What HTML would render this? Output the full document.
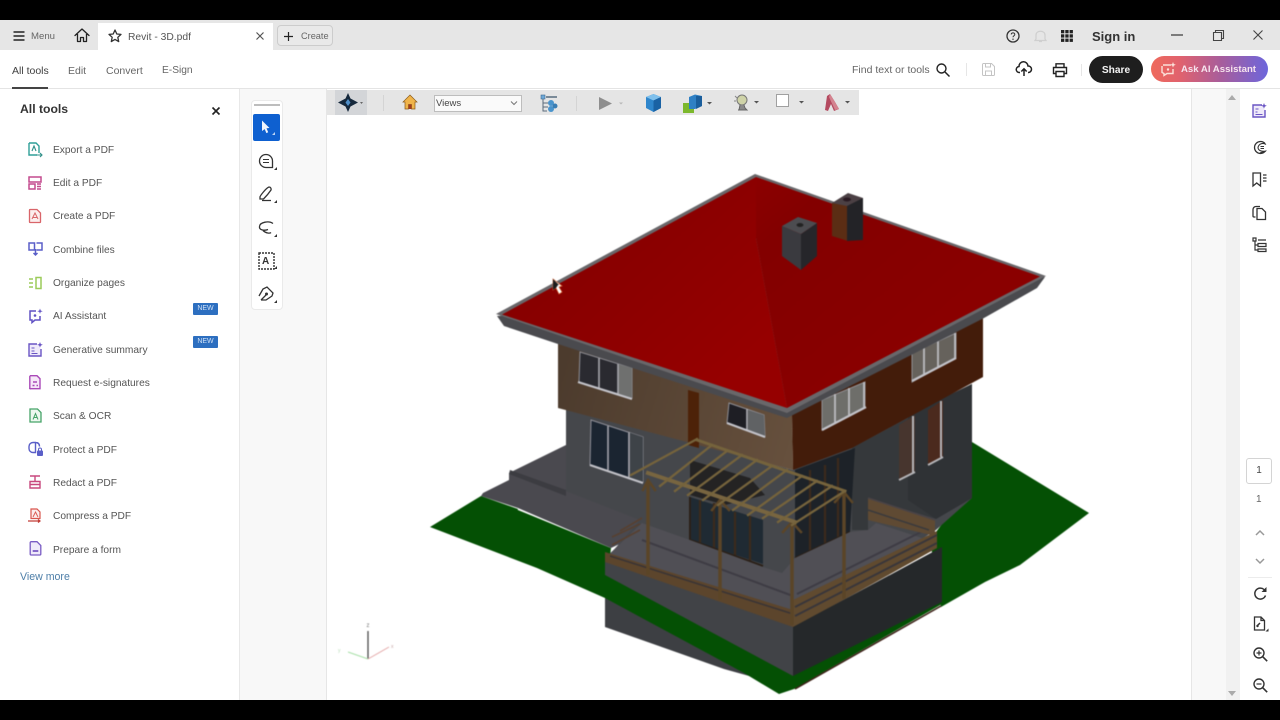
<!DOCTYPE html>
<html><head><meta charset="utf-8"><title>Revit - 3D.pdf</title>
<style>
*{box-sizing:border-box}
html,body{margin:0;padding:0;width:1280px;height:720px;overflow:hidden;background:#000}
body{font-family:"Liberation Sans",sans-serif;color:#444;position:relative}
.a{position:absolute}
.t{position:absolute;white-space:nowrap;font-size:10.8px;line-height:14px;color:#505050}
svg{position:absolute;overflow:visible}
.i{fill:none;stroke-width:1.3;stroke-linecap:round;stroke-linejoin:round}
.tool{left:53px;color:#555;font-size:10.2px;margin-top:1px}
.new{position:absolute;left:193px;width:25px;height:12px;background:#2d6fc0;color:#cfe0f5;font-size:7px;line-height:12px;text-align:center;border-radius:1px}
#app{position:absolute;left:0;top:0;width:1280px;height:720px;filter:blur(.35px)}
</style></head><body>
<div id="app">
<div class="a" style="left:0;top:0;width:1280px;height:20px;background:#000"></div>
<div class="a" style="left:0;top:700px;width:1280px;height:20px;background:#000"></div>
<div class="a" style="left:0;top:20px;width:1280px;height:30px;background:#e6e6e6"></div>
<div class="a" style="left:0;top:50px;width:1280px;height:39px;background:#fff;border-bottom:1px solid #e4e4e4"></div>
<div class="a" style="left:98px;top:23px;width:175px;height:27px;background:#fff"></div>

<!-- tab bar -->
<svg style="left:13px;top:31px" width="12" height="10"><path d="M0.500 1H11.500M0.500 5H11.500M0.500 9H11.500" stroke="#222" stroke-width="1.400"/></svg>
<div class="t" style="left:31px;top:30px;font-size:9.600px;color:#666">Menu</div>
<svg style="left:74px;top:28px" width="16" height="15"><path class="i" stroke="#222" stroke-width="1.500" d="M1 7.500L8 1l7 6.500M3.500 6v7.500h3V9.500h3v4h3V6"/></svg>
<svg style="left:108px;top:29px" width="14" height="14"><path class="i" stroke="#333" d="M7 1l1.800 4 4.200.4-3.200 2.900.9 4.300L7 10.400l-3.700 2.200.9-4.300L1 5.400l4.200-.4z"/></svg>
<div class="t" style="left:128px;top:31px;font-size:10.300px;color:#555">Revit - 3D.pdf</div>
<svg style="left:256px;top:32px" width="8" height="8"><path d="M.5.500l7 7M7.500.500l-7 7" stroke="#555" stroke-width="1.200"/></svg>
<div class="a" style="left:277px;top:25px;width:56px;height:21px;border:1px solid #ccc;border-radius:4px;background:#e9e9e9"></div>
<svg style="left:284px;top:32px" width="9" height="9"><path d="M4.500 0v9M0 4.500h9" stroke="#222" stroke-width="1.200"/></svg>
<div class="t" style="left:301px;top:29px;font-size:9.200px;color:#666">Create</div>

<svg style="left:1006px;top:29px" width="14" height="14"><circle cx="7" cy="7" r="6" fill="none" stroke="#333" stroke-width="1.300"/><path d="M5.200 5.400c.2-2.200 3.700-2 3.600.1 0 1.300-1.800 1.300-1.800 2.800" fill="none" stroke="#333"/><circle cx="7" cy="10.200" r=".7" fill="#333"/></svg>
<svg style="left:1034px;top:29px" width="13" height="14"><path d="M2 10V6c0-5 9-5 9 0v4l1 1.500H1zM5 12.500h3" fill="none" stroke="#cfcfcf" stroke-width="1.200"/></svg>
<svg style="left:1061px;top:30px" width="12" height="12" fill="#222"><rect width="3.300" height="3.300"/><rect x="4.300" width="3.300" height="3.300"/><rect x="8.600" width="3.300" height="3.300"/><rect y="4.300" width="3.300" height="3.300"/><rect x="4.300" y="4.300" width="3.300" height="3.300"/><rect x="8.600" y="4.300" width="3.300" height="3.300"/><rect y="8.600" width="3.300" height="3.300"/><rect x="4.300" y="8.600" width="3.300" height="3.300"/><rect x="8.600" y="8.600" width="3.300" height="3.300"/></svg>
<div class="t" style="left:1092px;top:29px;font-size:13px;font-weight:bold;color:#333;line-height:16px">Sign in</div>
<svg style="left:1171px;top:34px" width="12" height="2"><path d="M0 1h12" stroke="#444" stroke-width="1.300"/></svg>
<svg style="left:1213px;top:30px" width="11" height="11"><path d="M.5 2.500h8v8h-8zM2.500 2.500V.5h8v8h-2" fill="none" stroke="#444" stroke-width="1.100"/></svg>
<svg style="left:1253px;top:30px" width="10" height="10"><path d="M.5.500l9 9M9.500.500l-9 9" stroke="#444" stroke-width="1.100"/></svg>

<!-- second bar -->
<div class="t" style="left:12px;top:64px;color:#404040;font-size:10.500px">All tools</div>
<div class="a" style="left:12px;top:87px;width:36px;height:2px;background:#444"></div>
<div class="t" style="left:68px;top:64px;color:#666;font-size:10.500px">Edit</div>
<div class="t" style="left:106px;top:64px;color:#666;font-size:10.500px">Convert</div>
<div class="t" style="left:162px;top:64px;color:#666;font-size:10.200px">E-Sign</div>
<div class="t" style="left:852px;top:63px;color:#666;font-size:10.500px">Find text or tools</div>
<svg style="left:936px;top:63px" width="14" height="14"><circle cx="5.500" cy="5.500" r="4.500" fill="none" stroke="#222" stroke-width="1.400"/><path d="M9 9l4.500 4.500" stroke="#222" stroke-width="1.500"/></svg>
<div class="a" style="left:966px;top:63px;width:1px;height:13px;background:#e6e6e6"></div>
<svg style="left:982px;top:63px" width="13" height="13"><path d="M1.500.5h8l3 3v8a1 1 0 0 1-1 1h-10a1 1 0 0 1-1-1v-10a1 1 0 0 1 1-1zM3.500.5v3.500h5V.5M3.500 12.500V8h6v4.500" fill="none" stroke="#c4c4c4" stroke-width="1"/></svg>
<svg style="left:1016px;top:62px" width="16" height="15"><path d="M4 10.500H3.500a3 3 0 0 1-.5-6 4.500 4.500 0 0 1 9-.5 3.200 3.200 0 0 1 .5 6.500H12M8 14V7M5.300 9.500L8 6.800l2.700 2.700" fill="none" stroke="#222" stroke-width="1.500"/></svg>
<svg style="left:1052px;top:63px" width="16" height="14"><path d="M4 4V.8h8V4M4 10.500H1.500V4.500h13v6H12M4 8.500h8v5H4z" fill="none" stroke="#222" stroke-width="1.400"/></svg>
<div class="a" style="left:1081px;top:64px;width:1px;height:12px;background:#e6e6e6"></div>
<div class="a" style="left:1089px;top:56px;width:54px;height:27px;border-radius:14px;background:#1e1e1e;color:#f4f4f4;font-size:10.200px;font-weight:bold;text-align:center;line-height:29px">Share</div>
<div class="a" style="left:1151px;top:56px;width:117px;height:26px;border-radius:13px;background:linear-gradient(90deg,#ef6a5c 0%,#e0626e 25%,#a75d9c 60%,#6d66dc 100%);color:#f7e4ee;font-size:9.600px;font-weight:bold;line-height:28px;padding-left:30px;white-space:nowrap">Ask AI Assistant</div>
<svg style="left:1161px;top:62px" width="15" height="14"><path d="M2 3h8M1 4v6.500l2 1v2l3-2h6V7" fill="none" stroke="#fbe0d8" stroke-width="1.400"/><path d="M12 0l.8 2 2 .8-2 .8-.8 2-.8-2-2-.8 2-.8z" fill="#fbe0d8"/><circle cx="7" cy="7.500" r="1.200" fill="#fbe0d8"/></svg>

<!-- panels -->
<div class="a" style="left:0;top:89px;width:240px;height:611px;background:#fff;border-right:1px solid #e8e8e8"></div>
<div class="a" style="left:240px;top:89px;width:87px;height:611px;background:#f8f8f8;border-right:1px solid #e6e6e6"></div>
<div class="a" style="left:327px;top:89px;width:865px;height:611px;background:#fff"></div>
<div class="a" style="left:1191px;top:89px;width:49px;height:611px;background:#f8f8f8;border-left:1px solid #e6e6e6"></div>
<div class="a" style="left:1226px;top:89px;width:14px;height:611px;background:#f1f1f1"></div>
<div class="a" style="left:1240px;top:89px;width:40px;height:611px;background:#fff"></div>

<div class="t" style="left:20px;top:102px;font-size:12.200px;font-weight:bold;color:#333;line-height:14px">All tools</div>
<svg style="left:212px;top:107px" width="8" height="8"><path d="M.5.500l7 7M7.500.500l-7 7" stroke="#222" stroke-width="1.600"/></svg>

<!-- tool list -->
<svg style="left:27px;top:142px" width="16" height="16"><path d="M2 1h7l3 3v7M2 1v12h8" fill="none" stroke="#2f9f98" stroke-width="1.400"/><path d="M5 9l2-5 2 5M9 13h6M13 11l2 2-2 2" fill="none" stroke="#2f8f88" stroke-width="1.100"/></svg>
<div class="t tool" style="top:143px">Export a PDF</div>
<svg style="left:28px;top:176px" width="14" height="14"><path d="M1 1h12v5H1zM1 8h6v5H1zM9 8h4M9 10.500h4M9 13h4" fill="none" stroke="#c44a8e" stroke-width="1.500"/></svg>
<div class="t tool" style="top:176px">Edit a PDF</div>
<svg style="left:28px;top:209px" width="14" height="14"><path d="M1.500 1a.5.500 0 0 1 .5-.5h7l3.500 3.500v9a.5.500 0 0 1-.5.500H2a.5.500 0 0 1-.5-.5z" fill="#fbeeee" stroke="#d9656a" stroke-width="1.300"/><path d="M4 10l3-6 3 6M5 8.500h4" fill="none" stroke="#d9656a" stroke-width="1"/></svg>
<div class="t tool" style="top:209px">Create a PDF</div>
<svg style="left:28px;top:242px" width="15" height="15"><path d="M1 1h5.500v7H1zM8.500 1H14v7H8.500M7.500 7v6M5.500 11l2 2 2-2" fill="none" stroke="#5a5fc8" stroke-width="1.500"/></svg>
<div class="t tool" style="top:243px">Combine files</div>
<svg style="left:28px;top:276px" width="14" height="14"><path d="M8 1.500h5v11H8zM1 3h4M1 7h4M1 11h4" fill="none" stroke="#9ccb5a" stroke-width="1.500"/></svg>
<div class="t tool" style="top:276px">Organize pages</div>
<svg style="left:28px;top:308px" width="15" height="16"><path d="M8 3H2v9h2v2.500l3-2.500h5V8" fill="none" stroke="#6152c4" stroke-width="1.500"/><circle cx="7" cy="7.500" r="1.300" fill="#6152c4"/><path d="M12 .500l.7 2 2 .7-2 .7-.7 2-.7-2-2-.7 2-.7z" fill="#6152c4"/></svg>
<div class="t tool" style="top:309px">AI Assistant</div>
<div class="new" style="top:303px">NEW</div>
<svg style="left:28px;top:342px" width="15" height="15"><path d="M9 2H1v12h12V7" fill="#efeafa" stroke="#6a55c4" stroke-width="1.400"/><path d="M3.500 6h3M3.500 9h3M3.500 11.500h6" stroke="#6a55c4"/><path d="M12 0l.8 2 2 .8-2 .8-.8 2-.8-2-2-.8 2-.8z" fill="#6a55c4"/></svg>
<div class="t tool" style="top:343px">Generative summary</div>
<div class="new" style="top:336px">NEW</div>
<svg style="left:29px;top:375px" width="12" height="15"><path d="M1.500.7h6.500l3 3v10H1.500a.5.500 0 0 1-.7-.7V1.500z" fill="#f6e8f8" stroke="#aa4ab8" stroke-width="1.400"/><path d="M4 7h4M3.500 10.500h2M7.500 10.500h1.500" stroke="#aa4ab8" stroke-width="1.500"/></svg>
<div class="t tool" style="top:376px">Request e-signatures</div>
<svg style="left:29px;top:408px" width="13" height="15"><path d="M1 1h7.500l3.500 3.500v9.500H1z" fill="#eef8f0" stroke="#46a368" stroke-width="1.300"/><path d="M4 11.500l2.500-6 2.500 6M5 9.500h3" fill="none" stroke="#46a368"/></svg>
<div class="t tool" style="top:409px">Scan &amp; OCR</div>
<svg style="left:28px;top:441px" width="16" height="16"><path d="M5 1.500h2.500v10H5a4 4 0 0 1-4-4v-2a4 4 0 0 1 4-4zM7.500 1.500c3 0 4 1.500 4 4" fill="none" stroke="#5a5fc8" stroke-width="1.400"/><rect x="9" y="9.500" width="6" height="5.500" rx="1" fill="#5a5fc8"/><path d="M10.500 9.500v-1a1.500 1.500 0 0 1 3 0v1" fill="none" stroke="#5a5fc8"/></svg>
<div class="t tool" style="top:443px">Protect a PDF</div>
<svg style="left:28px;top:475px" width="14" height="14"><path d="M2 1h10M7 1v5M2 6.500h10v6.500H2zM2 9.500h10" fill="none" stroke="#c8487e" stroke-width="1.400"/></svg>
<div class="t tool" style="top:476px">Redact a PDF</div>
<svg style="left:28px;top:508px" width="15" height="16"><path d="M3 1h6l3 3v6.500H3z" fill="#fbecec" stroke="#d9564e" stroke-width="1.200"/><path d="M5 9l2.500-5 2.500 5" fill="none" stroke="#d9564e" stroke-width=".9"/><path d="M0 13h12M10 11.500l2 1.500-2 1.500" fill="none" stroke="#c23c36" stroke-width="1.200"/></svg>
<div class="t tool" style="top:509px">Compress a PDF</div>
<svg style="left:29px;top:541px" width="13" height="15"><path d="M1.200 1.700a1 1 0 0 1 1-1H8L11.800 4.500V13a1 1 0 0 1-1 1H2.200a1 1 0 0 1-1-1z" fill="#efeafa" stroke="#7a5cc4" stroke-width="1.300"/><path d="M3.700 10h5.600" stroke="#7a5cc4" stroke-width="1.800"/></svg>
<div class="t tool" style="top:543px">Prepare a form</div>
<div class="t" style="left:20px;top:570px;color:#4d7ea8;font-size:10.600px">View more</div>

<!-- tool strip -->
<div class="a" style="left:251px;top:100px;width:32px;height:210px;background:#fff;border:1px solid #eaeaea;border-radius:4px"></div>
<div class="a" style="left:254px;top:104px;width:26px;height:2px;background:#bdbdbd"></div>
<div class="a" style="left:253px;top:114px;width:27px;height:27px;background:#0e60d0;border-radius:2px"></div>
<svg style="left:260px;top:120px" width="16" height="16"><path d="M2 0.500l7.500 7.500-3 .3 1.700 4-1.800.8-1.700-4L2 11z" fill="#f2f6fc"/><path d="M15 12v3h-3z" fill="#bcd4f4"/></svg>
<svg style="left:258px;top:153px" width="20" height="18"><path d="M8 14.500a6.500 6.500 0 1 1 6.500-6.500v6.500z" fill="none" stroke="#333" stroke-width="1.300"/><path d="M5 6.500h6M5 9.500h6" stroke="#333"/><path d="M19 14v3h-3z" fill="#333"/></svg>
<svg style="left:258px;top:186px" width="20" height="18"><path d="M2 11c0-1 6-9 9-10 1.500 0 2.500 1.500 2 3-2 3-6 7.500-7.500 9H2zM4 14.500h9" fill="none" stroke="#333" stroke-width="1.300"/><path d="M19 14v3h-3z" fill="#333"/></svg>
<svg style="left:258px;top:220px" width="20" height="18"><path d="M15 3.500C11 .5 2 2 1.500 6.500 1 10 6 11 10 9.500M5 10.500c3 3 7 3 8 2" fill="none" stroke="#333" stroke-width="1.300"/><path d="M19 14v3h-3z" fill="#333"/></svg>
<svg style="left:258px;top:252px" width="20" height="18"><rect x="1" y="1" width="15" height="16" fill="none" stroke="#333" stroke-width="1.400" stroke-dasharray="2 1"/><path d="M19 14v3h-3z" fill="#333"/></svg>
<div class="t" style="left:262px;top:255px;font-size:10px;font-weight:bold;color:#333">A</div>
<svg style="left:258px;top:286px" width="20" height="18"><path d="M1 10l4-7 4-2 6 6-1 3-6 4H3M3 14l5-5" fill="none" stroke="#333" stroke-width="1.300"/><circle cx="8.500" cy="8" r="1.500" fill="#333"/><path d="M19 14v3h-3z" fill="#333"/></svg>

<!-- 3D toolbar -->
<div class="a" style="left:327px;top:90px;width:532px;height:25px;background:#e5e5e5"></div>
<div class="a" style="left:335px;top:90px;width:32px;height:25px;background:#d3d5d8"></div>
<svg style="left:338px;top:93px" width="30" height="20"><path d="M10 0l2.500 5.500L20 9.500l-7.500 4L10 19l-2.500-5.500L0 9.500l7.500-4z" fill="#15283c"/><path d="M10 6l2.500 3.500L10 13l-2.500-3.500z" fill="#4f8ec8"/><path d="M22 9h3l-1.500 2z" fill="#666"/></svg>
<div class="a" style="left:383px;top:95px;width:1px;height:16px;background:#d4d4d4"></div>
<svg style="left:403px;top:95px" width="14" height="14"><path d="M7 0L0 7h2v7h3.500V9.500h3V14H12V7h2z" fill="#f0b44a" stroke="#8a5a1a" stroke-width=".7"/><path d="M5.500 9.500h3V14h-3z" fill="#a03c1e"/></svg>
<div class="a" style="left:434px;top:95px;width:88px;height:17px;background:#fafafa;border:1px solid #bdbdbd"></div>
<div class="t" style="left:436px;top:97px;font-size:9.500px;color:#444">Views</div>
<svg style="left:510px;top:101px" width="8" height="5"><path d="M1 .5l3 3 3-3" fill="none" stroke="#777"/></svg>
<svg style="left:540px;top:94px" width="18" height="19"><path d="M3 5v12h4M3 9h5M3 13h5" fill="none" stroke="#5c6c7c"/><rect x="1" y="1" width="4" height="4" fill="#6ea9d8" stroke="#406a90" stroke-width=".6"/><rect x="6" y="2" width="11" height="2" fill="#7a8a98"/><circle cx="11" cy="9" r="3" fill="#4a94cc"/><circle cx="11" cy="15" r="3" fill="#4a94cc"/><circle cx="15" cy="12" r="2.500" fill="#3a7eb4"/></svg>
<div class="a" style="left:576px;top:96px;width:1px;height:15px;background:#d4d4d4"></div>
<svg style="left:598px;top:97px" width="28" height="13"><path d="M1 0l13 6.500-13 6.500z" fill="#8e8e8e"/><path d="M21 5.500h4l-2 2z" fill="#b8b8b8"/></svg>
<svg style="left:645px;top:94px" width="17" height="18"><path d="M8.500 0L16 3v11l-7.500 4L1 14V3z" fill="#2f86cc"/><path d="M1 3l7.500 3.500L16 3 8.500 0z" fill="#7fc0ec"/><path d="M8.500 6.500V18L16 14V3z" fill="#1a62a4"/></svg>
<svg style="left:682px;top:94px" width="32" height="20"><rect x="1" y="9" width="11" height="10" fill="#7cb82c"/><path d="M7 3l6-2.500 7 1.500v10l-7 3H7z" fill="#2f80c4"/><path d="M14 2l6 0v10l-6 3z" fill="#1a5e9c"/><path d="M25 8h5l-2.500 2.500z" fill="#555"/></svg>
<svg style="left:733px;top:93px" width="28" height="20"><circle cx="9" cy="7" r="5" fill="#cfd3a8" stroke="#777"/><path d="M7 12l-1 5h8l-2-2-1-3M5 17h9" fill="#8a8a8a" stroke="#666"/><path d="M2 3l2 2M1 8l2 0" stroke="#888"/><path d="M21 8h5l-2.500 2.500z" fill="#555"/></svg>
<div class="a" style="left:776px;top:94px;width:13px;height:13px;background:#fff;border:1px solid #a0a0a0"></div>
<svg style="left:798px;top:100px" width="8" height="5"><path d="M1 1h5L3.500 3.500z" fill="#555"/></svg>
<svg style="left:822px;top:94px" width="30" height="19"><path d="M3 16L5 2l3-2 5 8 4 7-5 2-3-7-3 7z" fill="#b44a60"/><path d="M8 0l5 8 4 7-4 1-6-13z" fill="#d4838f"/><path d="M23 7h5l-2.500 2.500z" fill="#555"/></svg>

<!-- HOUSE -->
<svg style="left:0;top:0;filter:blur(.5px)" width="1280" height="720" viewBox="0 0 1280 720">
<defs>
<linearGradient id="rl" x1="560" y1="210" x2="720" y2="380" gradientUnits="userSpaceOnUse"><stop offset="0" stop-color="#850000"/><stop offset=".45" stop-color="#8c0000"/><stop offset="1" stop-color="#960000"/></linearGradient>
<linearGradient id="rr" x1="756" y1="178" x2="900" y2="350" gradientUnits="userSpaceOnUse"><stop offset="0" stop-color="#8c0000"/><stop offset=".25" stop-color="#830000"/><stop offset="1" stop-color="#8a0000"/></linearGradient>
<linearGradient id="wb" x1="558" y1="370" x2="793" y2="440" gradientUnits="userSpaceOnUse"><stop offset="0" stop-color="#4c3b2d"/><stop offset="1" stop-color="#66503d"/></linearGradient>
</defs>
<!-- lower basement -->
<polygon points="605,590 605,627 724,669 793,688 793,640" fill="#3d3f43"/>
<!-- ground -->
<polygon points="430,527 481,496 518,509 611,548 605,598 537,568 498,553" fill="#045004"/>
<polygon points="605,570 793,670 942,600 942,604 794,689 779,694 744,673 605,598" fill="#045004"/>
<polygon points="972,442 1089,513 1020,565 985,582 941,607 930,540 960,500" fill="#045004"/>
<path d="M795 689L941 606" stroke="#3a1e14" stroke-width="1.500"/>
<path d="M518 509L611 547" stroke="#fff" stroke-width="2"/>
<!-- left terrace -->
<polygon points="566,445 509,473 509,480 483,493 481,496 518,508 611,548 650,530 650,480 566,440" fill="#4a494f"/>
<polygon points="509,474 566,496 566,490 510,470" fill="#3c3c41"/>
<!-- lower base wall, no gaps -->
<polygon points="566,408 793,470 972,384 972,498 936,530 793,620 605,560 640,520 566,491" fill="#45474b"/>
<polygon points="852,448 972,384 972,498 936,519 868,498 868,530 852,530" fill="#35383b"/>
<polygon points="908,415 972,384 972,498 936,519 908,500" fill="#2f3235"/>
<!-- recess glazing -->
<polygon points="690,497 763,520 763,564 690,540" fill="#1f2a33"/>
<polygon points="795,470 855,448 850,532 795,558" fill="#1d2228"/>
<path d="M700 500V545M714 503V550M735 512V556M750 516V561M810 470V552M825 465V546M838 458V540" stroke="#3b2a1c" stroke-width="2.200"/>
<path d="M690 497V540L763 566M795 558L850 532" stroke="#2a2018" stroke-width="2" fill="none"/>
<!-- terrace floor -->
<polygon points="605,558 642,523 690,540 763,567 782,573 795,558 850,532 868,530 876,523 937,543 794,620" fill="#504f55"/>
<path d="M642 540L793 596M797 594L935 525" stroke="#3e3c44" stroke-width="2"/>
<!-- rear rail -->
<polygon points="868,498 935,520 935,536 868,520" fill="#5f4a33"/>
<path d="M868 498L935 520" stroke="#4a4346" stroke-width="1.500"/>
<path d="M868 510L929 530" stroke="#3b3a3c" stroke-width="1.500"/>
<!-- rails -->
<polygon points="605,552 793,610 793,628 605,565" fill="#5c452c"/>
<path d="M610 556L793 614" stroke="#3a3435" stroke-width="1.500"/>
<path d="M620 531L642 518M612 537L640 524M612 545L640 530" stroke="#574030" stroke-width="1.600"/>
<polygon points="793,600 937,531 937,548 793,628" fill="#604a2f"/>
<path d="M795 607L937 535M795 616L937 543" stroke="#39363a" stroke-width="2"/>
<!-- terrace block -->
<polygon points="605,562 793,627 793,676 605,575" fill="#414347"/>
<polygon points="793,627 942,547 942,602 793,676" fill="#25282a"/>
<!-- upper walls -->
<polygon points="558,335 792,412 793,470 558,408" fill="url(#wb)"/>
<polygon points="792,415 983,312 983,377 852,448 793,470" fill="#431c0a"/>
<polygon points="688,390 699,393 699,448 688,445" fill="#4d2208"/>
<!-- shade under pergola -->
<polygon points="690,460 750,478 765,495 725,505 690,495" fill="#1e1d1c" opacity=".85"/>
<!-- windows upper -->
<g>
<polygon points="580,352 632,368 632,398 579,382" fill="#2a2a30" stroke="#8f8f96" stroke-width="1"/>
<polygon points="618,364 632,368 632,398 618,394" fill="#6f706f"/>
<path d="M599 358V388M618 364V394" stroke="#a6a6ac" stroke-width="1.600"/>
<path d="M578 382L632 399" stroke="#c2c2c8" stroke-width="2.200"/>
<polygon points="729,403 764,415 765,437 727,423" fill="#1e1e24" stroke="#8f8f96" stroke-width="1"/>
<polygon points="748,410 764,415 765,437 748,431" fill="#606264"/>
<path d="M747 409V431" stroke="#b0b0b6" stroke-width="1.600"/>
<path d="M727 423L765 437" stroke="#c2c2c8" stroke-width="2.200"/>
<polygon points="822,400 865,382 865,407 822,430" fill="#6e6e6a" stroke="#8f8f94" stroke-width="1"/>
<path d="M835 394V423M849 388V416M864 382V407" stroke="#bcbcc0" stroke-width="1.800"/>
<path d="M822 430L866 407" stroke="#c2c2c8" stroke-width="2.200"/>
<polygon points="912,353 956,333 956,358 912,382" fill="#66625c" stroke="#8f8f94" stroke-width="1"/>
<path d="M924 348V375M938 341V368M955 333V358" stroke="#bcbcc0" stroke-width="1.800"/>
<path d="M912 381L956 358" stroke="#c2c2c8" stroke-width="2.200"/>
<!-- lower left window -->
<polygon points="591,420 643,437 643,482 590,465" fill="#1b2531" stroke="#8f8f98" stroke-width="1"/>
<polygon points="628,432 643,437 643,482 628,477" fill="#3e4348"/>
<path d="M608 426V470M629 432V477" stroke="#a4a4ac" stroke-width="1.600"/>
<path d="M590 465L643 483" stroke="#c0c0c6" stroke-width="2.200"/>
<!-- lower right windows -->
<polygon points="899,425 915,415 915,473 899,480" fill="#47352e"/>
<path d="M913 416V473M899 480L915 472" stroke="#b4b4b8" stroke-width="2"/>
<polygon points="928,410 943,400 943,457 928,465" fill="#4b2a1e"/>
<path d="M941 401V457M928 465L943 457" stroke="#b4b4b8" stroke-width="2"/>
</g>
<!-- soffit + fascia -->
<polygon points="497,316 504,326 558,344 787,418 984,318 1037,288 1045,277" fill="#4a4a4e"/>
<polygon points="496,314 755,174 1046,276 787,413" fill="#69676a"/>
<!-- roof -->
<polygon points="502,314.500 756,177 756,238 787,408" fill="url(#rl)"/>
<polygon points="756,177 1040,276.500 787,408 756,238" fill="url(#rr)"/>
<!-- chimneys -->
<polygon points="832,203 848,198 848,241 832,236" fill="#5b2d14"/>
<polygon points="847,198 863,198 863,240 847,241" fill="#232327"/>
<polygon points="848,193 863,198 847,206 832,203" fill="#4b4044"/>
<ellipse cx="847" cy="199.500" rx="4" ry="2" fill="#2a1a22"/>
<polygon points="782,226 801,234 801,270 782,256" fill="#3a3a3f"/>
<polygon points="801,234 817,223 817,256 801,270" fill="#26262a"/>
<polygon points="798,217 817,223 801,234 782,226" fill="#4c4c50"/>
<ellipse cx="800" cy="225" rx="3.500" ry="2" fill="#222"/>
<!-- pergola -->
<g stroke-linecap="square">
<path d="M648 483V573M720 503V598M792 523V623M844 493V597" stroke="#5b4527" stroke-width="3.500"/>
<path d="M643 490L648 480M655 490L648 480M712 510L720 500M729 510L720 500M783 532L792 522M801 532L792 522M835 502L844 492M852 502L844 492" stroke="#5b4527" stroke-width="2.500"/>
<path d="M697 440L845 491" stroke="#75633c" stroke-width="3"/>
<path d="M648 473L795 522" stroke="#786540" stroke-width="4"/>
<g stroke="#75633c" stroke-width="2.300">
<path d="M697 439L631 475"/><path d="M712 445L660 486"/><path d="M727 451L675 491"/><path d="M742 455L688 495"/><path d="M757 460L703 500"/><path d="M772 466L718 505"/><path d="M787 470L733 510"/><path d="M802 476L748 515"/><path d="M817 481L763 518"/><path d="M832 486L778 522"/><path d="M845 491L792 525"/>
</g>
</g>
<!-- cursor -->
<path d="M553 279L553 290L556 288L559 294L562 292L559 287L562 286Z" fill="#fff" stroke="#d96a3c" stroke-width=".7"/>
<path d="M553 279L553 290L556 288L558 285L559 285Z" fill="#1c1c1c"/>
<!-- axis -->
<path d="M368 631V659" stroke="#4a4a4a" stroke-width="1.300"/>
<path d="M368 659L348 652" stroke="#a8e0a8" stroke-width="1"/>
<path d="M368 659L389 647" stroke="#e4a8a8" stroke-width="1"/>
<text x="366.500" y="627" font-size="6" fill="#777" font-family="Liberation Sans">z</text>
<text x="338" y="652" font-size="5" fill="#b8dcb8" font-family="Liberation Sans">y</text>
<text x="391" y="648" font-size="5" fill="#c8a8a8" font-family="Liberation Sans">x</text>
</svg>

<!-- scroll arrows -->
<svg style="left:1228px;top:95px" width="8" height="5"><path d="M4 0l4 5H0z" fill="#aaa"/></svg>
<svg style="left:1228px;top:691px" width="8" height="5"><path d="M4 5L8 0H0z" fill="#aaa"/></svg>

<!-- right rail -->
<svg style="left:1252px;top:103px" width="15" height="15"><path d="M10 2H1v12h12V7" fill="#efeafa" stroke="#6a55c4" stroke-width="1.400"/><path d="M3.500 6h3M3.500 9h2M3.500 11.500h7" stroke="#6a55c4"/><path d="M12 0l.8 2 2 .8-2 .8-.8 2-.8-2-2-.8 2-.8z" fill="#6a55c4"/></svg>
<svg style="left:1252px;top:140px" width="15" height="15"><path d="M13 3.500A6 6 0 1 0 13 11.500L8 13" fill="none" stroke="#333" stroke-width="1.300"/><path d="M14 4.500a5 5 0 0 0-8 3c0 3 4 4.500 8 3.500M8.500 6.500h3.500M8.500 8.500h3.500" fill="none" stroke="#333" stroke-width="1.100"/></svg>
<svg style="left:1252px;top:172px" width="15" height="15"><path d="M1 1h7.500v13L4.700 11 1 14zM11 3h3.500M11 6h3.500M11 9h3.500" fill="none" stroke="#333" stroke-width="1.300"/></svg>
<svg style="left:1252px;top:205px" width="15" height="15"><path d="M3.500 12H2a1 1 0 0 1-1-1V4.500a3 3 0 0 1 3-3h4M5 3.500h5l3.500 3.500v7.500H5z" fill="none" stroke="#333" stroke-width="1.300"/></svg>
<svg style="left:1252px;top:237px" width="15" height="15"><path d="M1 1h3v3H1zM3 4v9h3M3 8h3M6 3h8M6 6.500h8v3H6zM6 12h8v2.500H6z" fill="none" stroke="#333" stroke-width="1.200"/></svg>
<div class="a" style="left:1246px;top:458px;width:26px;height:26px;border:1px solid #d4d4d4;border-radius:3px;background:#fff;font-size:10px;line-height:24px;text-align:center;color:#444">1</div>
<div class="t" style="left:1256px;top:493px;font-size:10px;color:#666">1</div>
<svg style="left:1255px;top:530px" width="10" height="6"><path d="M1 5l4-4 4 4" fill="none" stroke="#999" stroke-width="1.500"/></svg>
<svg style="left:1255px;top:558px" width="10" height="6"><path d="M1 1l4 4 4-4" fill="none" stroke="#999" stroke-width="1.500"/></svg>
<div class="a" style="left:1248px;top:577px;width:24px;height:1px;background:#ececec"></div>
<svg style="left:1253px;top:586px" width="15" height="15"><path d="M12.500 9.500A5.500 5.500 0 1 1 11 3.500L13 5.500" fill="none" stroke="#333" stroke-width="1.500"/><path d="M13.500 1v5h-5z" fill="#333"/></svg>
<svg style="left:1253px;top:616px" width="16" height="16"><path d="M1.500 1h6.500l3.500 3.500v9.500h-10zM8 1v3.500h3.500" fill="none" stroke="#333" stroke-width="1.300"/><path d="M4 10l3-3" stroke="#333" stroke-width="1.500"/><circle cx="4.500" cy="10" r="1.200" fill="#333"/><path d="M15.500 12.500v3h-3z" fill="#333"/></svg>
<svg style="left:1253px;top:647px" width="15" height="15"><circle cx="6" cy="6" r="5" fill="none" stroke="#333" stroke-width="1.400"/><path d="M9.700 9.700l4.500 4.500" stroke="#333" stroke-width="1.600"/><path d="M3.500 6h5M6 3.500v5" stroke="#333" stroke-width="1.200"/></svg>
<svg style="left:1253px;top:678px" width="15" height="15"><circle cx="6" cy="6" r="5" fill="none" stroke="#333" stroke-width="1.400"/><path d="M9.700 9.700l4.500 4.500" stroke="#333" stroke-width="1.600"/><path d="M3.500 6h5" stroke="#333" stroke-width="1.200"/></svg>
</div>
</body></html>
